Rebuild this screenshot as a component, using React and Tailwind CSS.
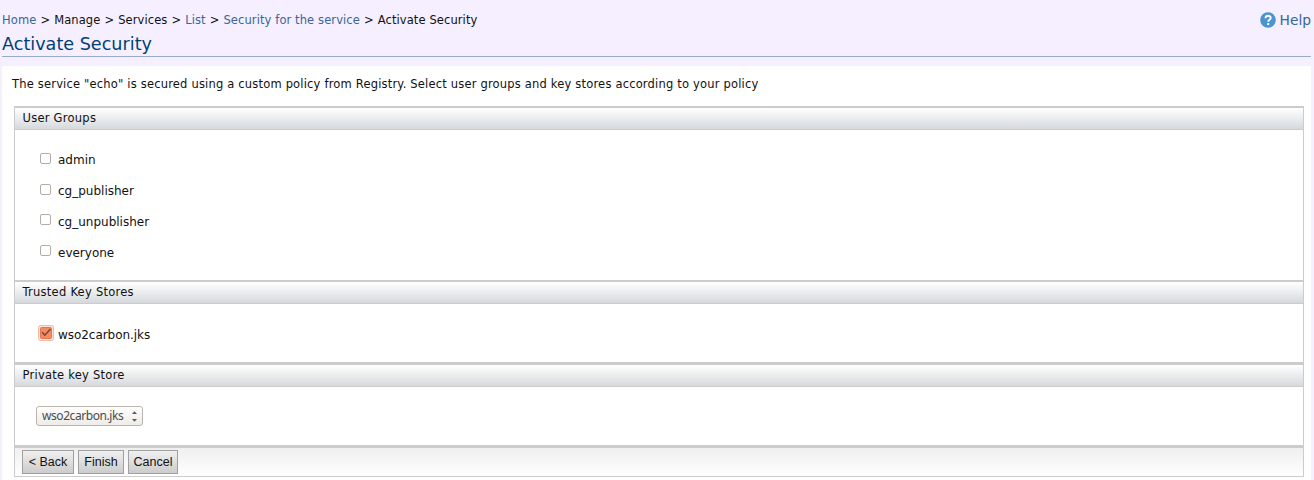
const groups = ['admin', 'cg_publisher', 'cg_unpublisher', 'everyone'];

function SectionHeader({ children, className = '' }) {
  return (
    <div className={`flex items-center border-b border-[#cccccc] bg-linear-to-b from-white to-[#d6d9dc] pl-[7.5px] text-[11.5px] tracking-[0.25px] ${className}`}>
      <span className="whitespace-nowrap">{children}</span>
    </div>
  );
}

function Checkbox({ checked }) {
  if (checked) {
    return (
      <svg width="16" height="16" viewBox="0 0 16 16" className="shrink-0" role="checkbox" aria-checked="true">
        <rect x="0.5" y="0.5" width="15" height="15" rx="2" fill="#fde3d8" stroke="#f3b8a0" />
        <rect x="2.5" y="2.5" width="11" height="11" rx="1" fill="#f28a62" stroke="#dd7852" />
        <path d="M4.2 7.2 6.8 10.3 12.5 4" fill="none" stroke="#784331" strokeWidth="1.4" />
      </svg>
    );
  }
  return <span role="checkbox" aria-checked="false" className="size-[11px] shrink-0 rounded-[2px] border border-[#b5ada5] bg-white" />;
}

function Button({ children, className }) {
  return (
    <button className={`h-6 border border-[#a0a0a0] bg-linear-to-b from-[#f0f0f0] to-[#cccccc] text-center font-['Liberation_Sans',sans-serif] text-[12.5px] whitespace-nowrap ${className}`}>
      {children}
    </button>
  );
}

function Breadcrumb() {
  return (
    <nav className="flex h-[15px] items-center gap-[4px] text-[11.5px] leading-[15px] tracking-[0.1px] whitespace-nowrap">
      <a className="text-[#386698]">Home</a>
      <span>&gt;</span>
      <span>Manage</span>
      <span>&gt;</span>
      <span>Services</span>
      <span>&gt;</span>
      <a className="text-[#386698]">List</a>
      <span>&gt;</span>
      <a className="text-[#386698]">Security for the service</a>
      <span>&gt;</span>
      <span>Activate Security</span>
    </nav>
  );
}

export default function App() {
  return (
    <div className="flex h-[480px] w-[1314px] flex-col overflow-hidden bg-[#f5efff] px-[2px] font-['DejaVu_Sans',sans-serif] text-[#111111]">
      <header className="mr-px flex h-[57px] justify-between border-b border-[#9aaac9] pt-[12px]">
        <div className="pt-px">
          <Breadcrumb />
          <h1 className="mt-[4px] text-[17.6px] leading-[24px] text-[#003f75]">Activate Security</h1>
        </div>
        <a className="flex h-4 items-center gap-[4px] text-[13.8px] text-[#386698]">
          <svg width="16" height="16" viewBox="0 0 16 16">
            <circle cx="8" cy="8" r="7.8" fill="#4b94cf" />
            <path d="M5.5 6.2C5.5 2.8 10.7 3 10.7 5.9c0 1.9-2.5 1.9-2.5 3.9" fill="none" stroke="#fff" strokeWidth="1.9" />
            <rect x="7.2" y="11" width="2" height="2" fill="#fff" />
          </svg>
          <span>Help</span>
        </a>
      </header>
      <main className="mt-[9px] mr-px h-[414px] bg-white pt-[11px]">
        <p className="ml-[10px] text-[11.5px] leading-[15px] tracking-[0.185px] whitespace-nowrap">
          The service "echo" is secured using a custom policy from Registry. Select user groups and key stores according to your policy
        </p>
        <div className="mt-[14px] ml-[12px] w-[1290px] border border-t-2 border-[#cccccc]">
          <SectionHeader className="h-[22px]">User Groups</SectionHeader>
          <div className="flex h-[150px] flex-col pt-[15px] pl-[25px]">
            {groups.map((g) => (
              <label key={g} className="flex h-[30.75px] items-center gap-[7px] text-[12px]">
                <span className="flex pb-[4px]"><Checkbox /></span>
                <span>{g}</span>
              </label>
            ))}
          </div>
          <SectionHeader className="h-[24px] border-t-2">Trusted Key Stores</SectionHeader>
          <div className="h-[58px] pt-[15px] pl-[23px]">
            <label className="flex h-[31px] items-center gap-[4px] text-[12px]">
              <span className="flex pb-[3px]"><Checkbox checked /></span>
              <span className="tracking-[-0.05px]">wso2carbon.jks</span>
            </label>
          </div>
          <SectionHeader className="h-[25px] border-t-3">Private key Store</SectionHeader>
          <div className="h-[58px] pt-[19px] pl-[21px]">
            <button className="flex h-5 w-[107px] items-center justify-between rounded-[3px] border border-[#bdb5ad] bg-linear-to-b from-white to-[#eeebe8] pr-[5px] pl-[5px] font-['Noto_Sans',sans-serif] text-[12px] tracking-[-0.43px] text-[#4c4c4c]">
              <span>wso2carbon.jks</span>
              <svg width="5" height="12" viewBox="0 0 5 12" fill="#5c5c5c">
                <path d="M0 4 2.5 1.3 5 4ZM0 9 2.5 11.7 5 9Z" />
              </svg>
            </button>
          </div>
          <div className="flex h-[31px] items-start gap-1 border-t-3 border-[#cccccc] bg-linear-to-b from-[#efefef] to-white pt-[2px] pl-[7px]">
            <Button className="w-[52px]">&lt; Back</Button>
            <Button className="w-[46px]">Finish</Button>
            <Button className="w-[50px]">Cancel</Button>
          </div>
        </div>
      </main>
    </div>
  );
}
